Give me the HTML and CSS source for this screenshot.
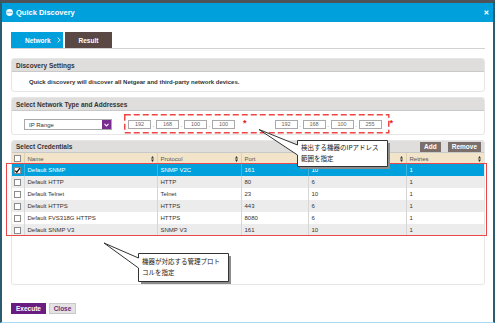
FILE: index.html
```html
<!DOCTYPE html>
<html lang="ja">
<head>
  <meta charset="UTF-8">
  <title>Quick Discovery</title>
  <meta name="viewport" content="width=device-width, initial-scale=1">
  <link rel="stylesheet" href="styles.css">
</head>
<body>
<div class="dialog">
  <!-- Title bar -->
  <div class="titlebar">
    <svg class="title-icon" width="7" height="7" viewBox="0 0 7 7"><circle cx="3.5" cy="3.5" r="3.4" fill="#fff"/><rect x="0.6" y="2.8" width="5.8" height="1.4" fill="#7fcbee"/></svg>
    <span>Quick Discovery</span>
    <svg class="close-x" width="5" height="5" viewBox="0 0 5 5"><path d="M0.6 0.6 L4.4 4.4 M4.4 0.6 L0.6 4.4" stroke="#fff" stroke-width="1.3"/></svg>
  </div>

  <div class="content">
    <!-- Wizard steps -->
    <div class="steps">
      <div class="step step-current">Network
        <svg class="chev" width="4" height="6" viewBox="0 0 4 6"><path d="M0.7 0.6 L3.2 3 L0.7 5.4" fill="none" stroke="#fff" stroke-width="0.9"/></svg>
      </div>
      <div class="step step-next">Result</div>
    </div>

    <div class="panel">
      <div class="panel-head">Discovery Settings</div>
      <div class="panel-body note">Quick discovery will discover all Netgear and third-party network devices.</div>
    </div>

    <div class="panel">
      <div class="panel-head">Select Network Type and Addresses</div>
      <div class="panel-body address-row">
        <div class="select">
          <span>IP Range</span>
          <span class="select-btn"><svg width="5" height="4" viewBox="0 0 5 4"><path d="M0.5 0.8 L2.5 3 L4.5 0.8" fill="none" stroke="#fff" stroke-width="1.1"/></svg></span>
        </div>
        <div class="ip-group">
          <span class="octet">192</span><span class="dot">.</span><span class="octet">168</span><span class="dot">.</span><span class="octet">100</span><span class="dot">.</span><span class="octet">100</span>
          <span class="req">*</span>
        </div>
        <div class="ip-group">
          <span class="octet">192</span><span class="dot">.</span><span class="octet">168</span><span class="dot">.</span><span class="octet">100</span><span class="dot">.</span><span class="octet">255</span>
          <span class="req">*</span>
        </div>
      </div>
    </div>

    <div class="panel creds">
      <div class="panel-head">
        <span>Select Credentials</span>
        <span class="head-buttons"><button class="btn-dark">Add</button><button class="btn-dark">Remove</button></span>
      </div>
      <table class="grid">
        <colgroup><col class="c-cb"><col class="c-name"><col class="c-proto"><col class="c-port"><col class="c-time"><col></colgroup>
        <thead>
          <tr>
            <th><span class="cb"></span></th>
            <th><div class="th">Name<svg class="sort" width="3" height="6" viewBox="0 0 3 6"><path d="M1.5 0 L3 2.4 H0 Z M0 3.6 H3 L1.5 6 Z" fill="#333"/></svg></div></th>
            <th><div class="th">Protocol<svg class="sort" width="3" height="6" viewBox="0 0 3 6"><path d="M1.5 0 L3 2.4 H0 Z M0 3.6 H3 L1.5 6 Z" fill="#333"/></svg></div></th>
            <th><div class="th">Port<svg class="sort" width="3" height="6" viewBox="0 0 3 6"><path d="M1.5 0 L3 2.4 H0 Z M0 3.6 H3 L1.5 6 Z" fill="#333"/></svg></div></th>
            <th><div class="th th-end"><svg class="sort" width="3" height="6" viewBox="0 0 3 6"><path d="M1.5 0 L3 2.4 H0 Z M0 3.6 H3 L1.5 6 Z" fill="#333"/></svg></div></th>
            <th><div class="th">Retries<svg class="sort" width="3" height="6" viewBox="0 0 3 6"><path d="M1.5 0 L3 2.4 H0 Z M0 3.6 H3 L1.5 6 Z" fill="#333"/></svg></div></th>
          </tr>
        </thead>
        <tbody>
          <tr class="selected">
            <td><span class="cb checked"><svg width="7" height="7" viewBox="0 0 7 7"><path d="M1.2 3.6 L2.8 5.2 L5.9 1.2" fill="none" stroke="#111" stroke-width="1.3"/></svg></span></td>
            <td>Default SNMP</td><td>SNMP V2C</td><td>161</td><td>10</td><td>1</td>
          </tr>
          <tr><td><span class="cb"></span></td><td>Default HTTP</td><td>HTTP</td><td>80</td><td>6</td><td>1</td></tr>
          <tr><td><span class="cb"></span></td><td>Default Telnet</td><td>Telnet</td><td>23</td><td>10</td><td>1</td></tr>
          <tr><td><span class="cb"></span></td><td>Default HTTPS</td><td>HTTPS</td><td>443</td><td>6</td><td>1</td></tr>
          <tr><td><span class="cb"></span></td><td>Default FVS318G HTTPS</td><td>HTTPS</td><td>8080</td><td>6</td><td>1</td></tr>
          <tr><td><span class="cb"></span></td><td>Default SNMP V3</td><td>SNMP V3</td><td>161</td><td>10</td><td>1</td></tr>
        </tbody>
      </table>
    </div>

    <div class="actions">
      <button class="btn-primary">Execute</button>
      <button class="btn-light">Close</button>
    </div>
  </div>
</div>

<!-- Annotations drawn over the screenshot -->
<svg class="marks" width="500" height="328" viewBox="0 0 500 328">
  <rect x="124.75" y="114.75" width="264" height="18" fill="none" stroke="#f04545" stroke-width="1.5" stroke-dasharray="6 3"/>
  <rect x="6.5" y="163.5" width="480" height="72" fill="none" stroke="#ea4848" stroke-width="1"/>
  <path d="M300 143 H390 V169 H300 Z" fill="#8c8c8c"/>
  <path d="M297.5 140.5 H387.5 V166.5 H297.5 V155 L259 129.5 L297.5 145 Z" fill="#fff" stroke="#333" stroke-width="1"/>
  <path d="M141 256 H231 V284 H141 Z" fill="#8c8c8c"/>
  <path d="M138.5 253.5 H228.5 V281.5 H138.5 V268 L104 243 L138.5 258 Z" fill="#fff" stroke="#333" stroke-width="1"/>
</svg>
<div class="callout callout-ip">検出する機器のIPアドレス<br>範囲を指定</div>
<div class="callout callout-proto">機器が対応する管理プロト<br>コルを指定</div>
</body>
</html>
```

FILE: styles.css
```css
body {
  margin: 0;
  width: 500px;
  height: 328px;
  position: relative;
  overflow: hidden;
  background: #fff;
  font-family: 'Liberation Sans', Arial, sans-serif;
  color: #333;
}
.dialog {
  width: 495px;
  height: 323px;
  box-sizing: border-box;
  border-top: 3px solid #4e5357;
  border-left: 2px solid #2c5c70;
  border-right: 2px solid #2c5c70;
  border-bottom: 1px solid #a6dbf0;
  display: flex;
  flex-direction: column;
}
.titlebar {
  height: 19px;
  background: #00a0dc;
  display: flex;
  align-items: center;
  padding: 0 4px;
  color: #fff;
  font-weight: bold;
  font-size: 7.5px;
}
.title-icon {
  margin-right: 3px;
}
.close-x {
  margin-left: auto;
}
.content {
  padding: 10px 8px 0 9px;
}
.steps {
  display: flex;
  gap: 2px;
  border-bottom: 1px solid #d2d2d2;
}
.step {
  height: 16px;
  display: flex;
  align-items: center;
  box-sizing: border-box;
  color: #fff;
  font-weight: bold;
  font-size: 6.5px;
}
.step-current {
  width: 52px;
  padding-left: 14px;
  background: #00a0dc;
}
.chev {
  margin-left: 6px;
}
.step-next {
  width: 47px;
  justify-content: center;
  background: #5a4845;
}
.panel {
  margin-top: 5px;
  border: 1px solid #e6e6e6;
  border-radius: 3px;
  background: #fff;
}
.steps + .panel {
  margin-top: 9px;
}
.panel-head {
  height: 13px;
  box-sizing: border-box;
  display: flex;
  align-items: center;
  justify-content: space-between;
  padding: 0 3px 0 4px;
  background: #dfdedc;
  border-bottom: 1px solid #c9c9c9;
  border-radius: 2px 2px 0 0;
  font-weight: bold;
  font-size: 6.5px;
  color: #333;
}
.note {
  height: 19px;
  display: flex;
  align-items: center;
  padding-left: 17px;
  font-size: 6px;
  font-weight: bold;
  color: #333;
}
.address-row {
  height: 23px;
  box-sizing: border-box;
  padding: 8px 0 0 12px;
  display: flex;
  align-items: flex-start;
}
.select {
  width: 88px;
  height: 11px;
  box-sizing: border-box;
  border: 1px solid #a8a8a8;
  display: flex;
  align-items: center;
  justify-content: space-between;
  padding-left: 4px;
  font-size: 6px;
  color: #333;
}
.select-btn {
  width: 9px;
  height: 9px;
  background: #7a2b8f;
  display: flex;
  align-items: center;
  justify-content: center;
}
.ip-group {
  display: flex;
  align-items: center;
  margin-top: 1px;
  margin-left: 16px;
}
.ip-group + .ip-group {
  margin-left: 28px;
}
.octet {
  width: 23px;
  height: 9px;
  box-sizing: border-box;
  border: 1px solid #a9a9a9;
  font-size: 5.5px;
  line-height: 7px;
  text-align: center;
  color: #666;
}
.dot {
  width: 5px;
  text-align: center;
  font-size: 6px;
  color: #666;
}
.req {
  align-self: flex-start;
  margin-left: 8px;
  margin-top: -1px;
  height: 6px;
  line-height: 9px;
  color: #e81c1c;
  font-size: 9px;
  font-weight: bold;
}
.creds {
  height: 145px;
  box-sizing: border-box;
}
.creds .panel-head {
  height: 12px;
}
.head-buttons {
  display: flex;
  gap: 7px;
}
.btn-dark {
  height: 10px;
  padding: 0 4px;
  border: none;
  background: #7b6f6b;
  color: #fff;
  font-family: inherit;
  font-weight: bold;
  font-size: 6.5px;
}
.grid {
  width: 100%;
  table-layout: fixed;
  border-collapse: collapse;
  font-size: 6px;
}
.c-cb { width: 12px; }
.c-name { width: 133px; }
.c-proto { width: 84px; }
.c-port { width: 67px; }
.c-time { width: 98px; }
.grid th {
  height: 11px;
  padding: 0 3px;
  background: #f1e4c9;
  border-left: 1px solid #ddd0b4;
  font-weight: normal;
  color: #555;
  text-align: left;
}
.grid th:first-child,
.grid td:first-child {
  border-left: none;
  padding: 0;
  text-align: center;
}
.th {
  display: flex;
  align-items: center;
  justify-content: space-between;
}
.th-end {
  justify-content: flex-end;
}
.grid td {
  height: 12px;
  padding: 0 3px;
  border-left: 1px solid #d6d6d6;
  white-space: nowrap;
  color: #333;
}
.grid tbody tr:nth-child(even) {
  background: #ececec;
}
.grid tr.selected {
  background: #00a0dc;
}
.grid tr.selected td {
  color: #fff;
  border-left-color: #3bb3e3;
}
.cb {
  display: inline-block;
  width: 7px;
  height: 7px;
  box-sizing: border-box;
  border: 1px solid #8c8c8c;
  background: #fff;
  vertical-align: middle;
  position: relative;
}
.cb svg {
  position: absolute;
  left: -1px;
  top: -1px;
}
.actions {
  margin-top: 18px;
  display: flex;
  gap: 3px;
}
.actions button {
  height: 11px;
  padding: 0;
  font-family: inherit;
  font-weight: bold;
  font-size: 6.5px;
}
.btn-primary {
  width: 35px;
  border: none;
  background: #6a1d80;
  color: #fff;
}
.btn-light {
  width: 27px;
  border: 1px solid #c9c9c9;
  background: #e3e3e3;
  color: #6a2a80;
}
.marks {
  position: absolute;
  left: 0;
  top: 0;
  pointer-events: none;
}
.callout {
  position: absolute;
  font-family: 'Noto Sans CJK JP', sans-serif;
  font-size: 6.5px;
  line-height: 11px;
  color: #222;
}
.callout-ip {
  left: 301px;
  top: 142px;
}
.callout-proto {
  left: 142px;
  top: 256px;
}
```
